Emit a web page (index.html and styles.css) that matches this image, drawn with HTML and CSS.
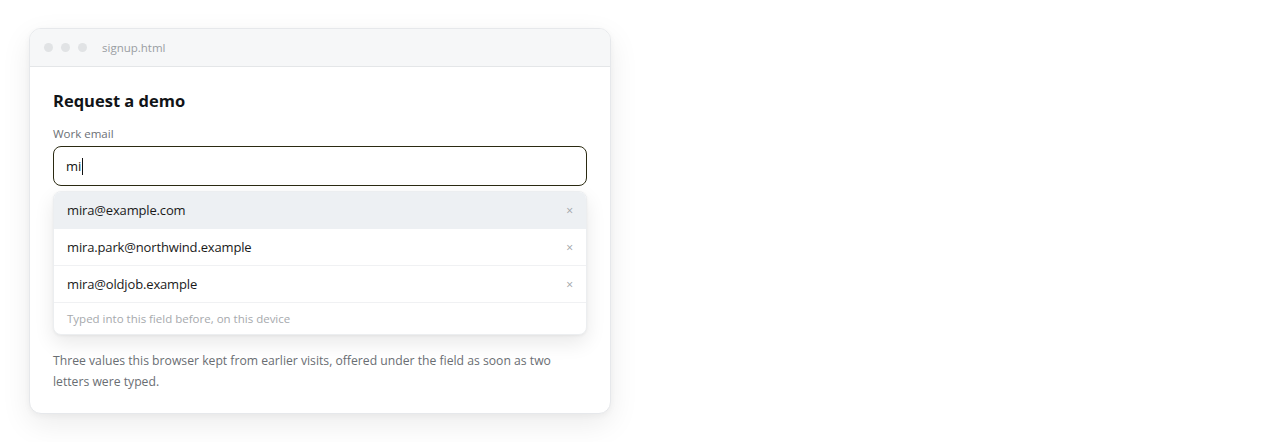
FILE: index.html
```html
<!DOCTYPE html>
<html lang="en">
<head>
    <meta charset="UTF-8">
    <meta name="viewport" content="width=device-width, initial-scale=1.0">
    <title>signup.html</title>
    <link rel="stylesheet" href="styles.css">
</head>
<body>
    <div class="window">
        <div class="titlebar">
            <span class="dot"></span>
            <span class="dot"></span>
            <span class="dot"></span>
            <span class="filename">signup.html</span>
        </div>

        <div class="content">
            <h1>Request a demo</h1>
            <label class="label" for="email">Work email</label>
            <div class="field">
                <div class="input" id="email">mi<span class="caret"></span></div>

                <div class="suggestions">
                    <div class="suggestion active">
                        <span>mira@example.com</span>
                        <span class="remove">&times;</span>
                    </div>
                    <div class="suggestion">
                        <span>mira.park@northwind.example</span>
                        <span class="remove">&times;</span>
                    </div>
                    <div class="suggestion">
                        <span>mira@oldjob.example</span>
                        <span class="remove">&times;</span>
                    </div>
                    <div class="suggestions-note">Typed into this field before, on this device</div>
                </div>
            </div>

            <p class="note">Three values this browser kept from earlier visits, offered under the field as soon as two letters were typed.</p>
        </div>
    </div>
</body>
</html>
```

FILE: styles.css
```css
body {
    margin: 0;
    padding: 28px 29px;
    background: #fff;
    font-family: "Open Sans", "Noto Sans", sans-serif;
    color: #1c1c1c;
}
.window {
    width: 582px;
    background: #fff;
    border: 1px solid #e6e8eb;
    border-radius: 12px;
    box-shadow: 0 10px 30px rgba(0,0,0,0.08), 0 2px 6px rgba(0,0,0,0.04);
    overflow: hidden;
    box-sizing: border-box;
}
.titlebar {
    height: 38px;
    background: #f6f7f8;
    border-bottom: 1px solid #e4e6e8;
    display: flex;
    align-items: center;
    padding: 0 14px;
    box-sizing: border-box;
}
.dot {
    width: 9px;
    height: 9px;
    border-radius: 50%;
    background: #e1e3e5;
    margin-right: 8px;
}
.filename {
    margin-left: 7px;
    font-size: 11.5px;
    color: #9a9ea3;
}
.content {
    padding: 22px 23px 21px;
}
h1 {
    margin: 0 0 14px;
    font-size: 16.5px;
    font-weight: 700;
    color: #111418;
}
.label {
    display: block;
    font-size: 11.5px;
    color: #6b6f75;
    margin-bottom: 5px;
}
.field {
    position: relative;
}
.input {
    height: 40px;
    border: 1px solid #2b2a12;
    border-radius: 8px;
    padding: 0 12px;
    display: flex;
    align-items: center;
    font-size: 13px;
    color: #111;
    box-sizing: border-box;
}
.caret {
    display: inline-block;
    width: 1px;
    height: 17px;
    background: #111;
    margin-left: 1px;
}
.suggestions {
    margin-top: 5px;
    border: 1px solid #eceef0;
    border-radius: 8px;
    background: #fff;
    box-shadow: 0 8px 20px rgba(0,0,0,0.09), 0 1px 3px rgba(0,0,0,0.05);
    overflow: hidden;
}
.suggestion {
    height: 37px;
    display: flex;
    align-items: center;
    justify-content: space-between;
    padding: 0 13px;
    font-size: 13px;
    letter-spacing: -0.15px;
    color: #1a1a1a;
    border-bottom: 1px solid #f0f1f3;
    box-sizing: border-box;
}
.suggestion.active {
    background: #edf0f3;
    border-bottom-color: #edf0f3;
}
.remove {
    color: #9ea2a6;
    font-size: 12px;
}
.suggestions-note {
    height: 31px;
    display: flex;
    align-items: center;
    padding: 0 13px;
    font-size: 11.5px;
    color: #a6a9ad;
}
.note {
    margin: 15px 0 0;
    font-size: 12.2px;
    line-height: 21px;
    color: #6a6e73;
}
```
